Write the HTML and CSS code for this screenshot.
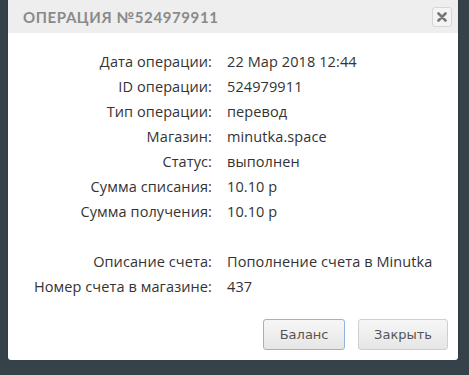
FILE: index.html
```html
<!DOCTYPE html>
<html>
<head>
    <title>Операция №524979911</title>
    <link rel="stylesheet" href="styles.css">
</head>
<body>

<div class="dialog">
    <div class="dialog-head">
        <span class="dialog-title">Операция №524979911</span>
        <button class="close-btn" title="Закрыть">
            <svg width="10" height="10" viewBox="0 0 10 10"><path d="M1.5 1.5 L8.5 8.5 M8.5 1.5 L1.5 8.5" stroke="#777" stroke-width="2.6" stroke-linecap="round"/></svg>
        </button>
    </div>

    <div class="dialog-body">
        <div class="row"><div class="lbl">Дата операции:</div><div class="val">22 Мар 2018 12:44</div></div>
        <div class="row"><div class="lbl">ID операции:</div><div class="val">524979911</div></div>
        <div class="row"><div class="lbl">Тип операции:</div><div class="val">перевод</div></div>
        <div class="row"><div class="lbl">Магазин:</div><div class="val">minutka.space</div></div>
        <div class="row"><div class="lbl">Статус:</div><div class="val">выполнен</div></div>
        <div class="row"><div class="lbl">Сумма списания:</div><div class="val">10.10 р</div></div>
        <div class="row"><div class="lbl">Сумма получения:</div><div class="val">10.10 р</div></div>
        <div class="row empty"></div>
        <div class="row"><div class="lbl">Описание счета:</div><div class="val">Пополнение счета в Minutka</div></div>
        <div class="row"><div class="lbl">Номер счета в магазине:</div><div class="val">437</div></div>
    </div>

    <div class="dialog-foot">
        <button class="btn btn-focus">Баланс</button>
        <button class="btn">Закрыть</button>
    </div>
</div>

</body>
</html>
```

FILE: styles.css
```css
body {
    margin: 0;
    padding: 0;
    background-color: #36424a;
    font-family: "Open Sans", Arial, sans-serif;
}
.dialog {
    width: 450px;
    margin-left: 8px;
    background-color: #fff;
    border-radius: 0 0 3px 3px;
    box-shadow: 0 1px 2px rgba(0, 0, 0, 0.3);
}
.dialog-head {
    height: 33px;
    background-color: #eeeeee;
    display: flex;
    align-items: center;
    justify-content: space-between;
    padding: 0 6px 0 15px;
}
.dialog-title {
    font-family: "Lato", Arial, sans-serif;
    font-weight: bold;
    font-size: 15px;
    letter-spacing: 0.6px;
    text-transform: uppercase;
    color: #8a8a8a;
}
.close-btn {
    width: 20px;
    height: 20px;
    padding: 0;
    border: 1px solid #d6d6d6;
    border-radius: 3px;
    background-color: #f4f4f4;
    display: flex;
    align-items: center;
    justify-content: center;
}
.dialog-body {
    padding: 16px 0 0 0;
}
.row {
    display: flex;
    height: 25px;
    align-items: center;
    font-size: 14.5px;
    letter-spacing: 0.1px;
    color: #333;
}
.lbl {
    width: 204px;
    text-align: right;
}
.val {
    padding-left: 15px;
}
.dialog-foot {
    display: flex;
    justify-content: flex-end;
    gap: 13px;
    padding: 20px 10px 10px 0;
}
.btn {
    height: 31px;
    padding: 0 15px;
    font-family: "DejaVu Sans", Verdana, sans-serif;
    font-size: 13px;
    color: #555;
    background: linear-gradient(#f6f6f6, #e6e6e6);
    border: 1px solid #cfcfcf;
    border-radius: 3px;
}
.btn-focus {
    border-color: #92b4dd;
    width: 82px;
}
```
